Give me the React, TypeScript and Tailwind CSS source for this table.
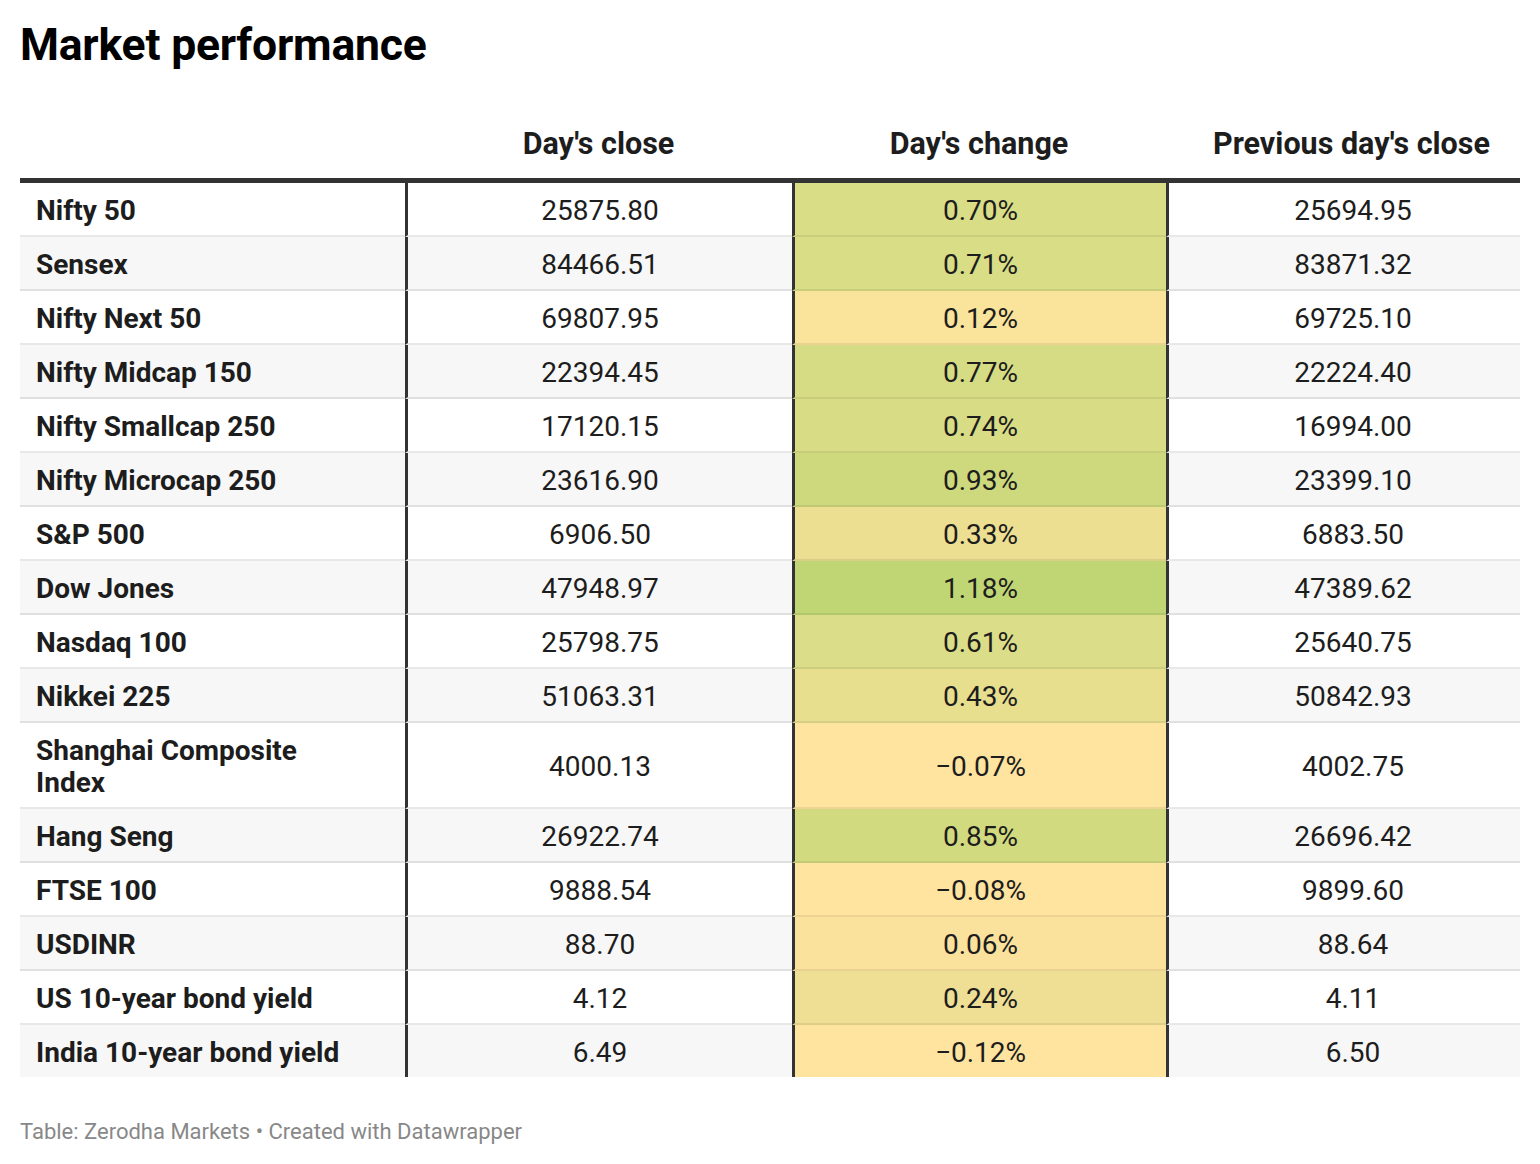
import React from "react";

type Row = { name: string; close: string; change: string; prev: string; bg: string };

const rows: Row[] = [
  { name: "Nifty 50", close: "25875.80", change: "0.70%", prev: "25694.95", bg: "#d9dd86" },
  { name: "Sensex", close: "84466.51", change: "0.71%", prev: "83871.32", bg: "#d8dd86" },
  { name: "Nifty Next 50", close: "69807.95", change: "0.12%", prev: "69725.10", bg: "#fae39b" },
  { name: "Nifty Midcap 150", close: "22394.45", change: "0.77%", prev: "22224.40", bg: "#d6dc84" },
  { name: "Nifty Smallcap 250", close: "17120.15", change: "0.74%", prev: "16994.00", bg: "#d7dc85" },
  { name: "Nifty Microcap 250", close: "23616.90", change: "0.93%", prev: "23399.10", bg: "#cdd97c" },
  { name: "S&P 500", close: "6906.50", change: "0.33%", prev: "6883.50", bg: "#ecdf92" },
  { name: "Dow Jones", close: "47948.97", change: "1.18%", prev: "47389.62", bg: "#c0d674" },
  { name: "Nasdaq 100", close: "25798.75", change: "0.61%", prev: "25640.75", bg: "#dcdd88" },
  { name: "Nikkei 225", close: "51063.31", change: "0.43%", prev: "50842.93", bg: "#e7de8e" },
  { name: "Shanghai Composite Index", close: "4000.13", change: "\u22120.07%", prev: "4002.75", bg: "#ffe4a0" },
  { name: "Hang Seng", close: "26922.74", change: "0.85%", prev: "26696.42", bg: "#d2da80" },
  { name: "FTSE 100", close: "9888.54", change: "\u22120.08%", prev: "9899.60", bg: "#ffe4a0" },
  { name: "USDINR", close: "88.70", change: "0.06%", prev: "88.64", bg: "#fbe29c" },
  { name: "US 10-year bond yield", close: "4.12", change: "0.24%", prev: "4.11", bg: "#eedf94" },
  { name: "India 10-year bond yield", close: "6.49", change: "\u22120.12%", prev: "6.50", bg: "#ffe4a0" },
];

export default function App() {
  return (
    <div
      className="w-[1540px] min-h-[1164px] bg-white text-[#1d1d1d]"
      style={{ fontFamily: "Roboto, 'Liberation Sans', sans-serif" }}
    >
      <div className="pl-5 pr-5 pt-[18px]">
        <h1 className="text-[44.5px] leading-[54px] font-bold text-black tracking-[-0.2px]">Market performance</h1>
        <div className="mt-[56px] w-[1500px]">
          <div className="flex items-end border-b-[5px] border-[#333333] pb-[18px] text-[30.5px] leading-[32px] font-bold">
            <div className="w-[385px] shrink-0" />
            <div className="w-[387px] shrink-0 text-center">Day's close</div>
            <div className="w-[374px] shrink-0 text-center">Day's change</div>
            <div className="flex-1 pl-[17px] text-center">Previous day's close</div>
          </div>
          {rows.map((r, i) => {
            const isLast = i === rows.length - 1;
            return (
              <div
                key={r.name}
                className={`flex text-[28px] leading-[32px] ${i % 2 === 1 ? "bg-[#f7f7f7]" : "bg-white"}`}
              >
                <div
                  className={`w-[385px] shrink-0 pl-4 pr-[60px] pt-[12px] pb-[8px] font-bold ${
                    isLast ? "" : "border-b-2 border-black/[0.09]"
                  }`}
                >
                  {r.name}
                </div>
                <div
                  className={`w-[387px] shrink-0 border-l-[3px] border-l-[#333333] flex items-center justify-center pt-[4px] ${
                    isLast ? "" : "border-b-2 border-b-black/[0.09]"
                  }`}
                >
                  {r.close}
                </div>
                <div
                  className={`w-[374px] shrink-0 border-l-[3px] border-l-[#333333] flex items-center justify-center pt-[4px] ${
                    isLast ? "" : "border-b-2 border-b-black/[0.07]"
                  }`}
                  style={{ backgroundColor: r.bg }}
                >
                  {r.change}
                </div>
                <div
                  className={`flex-1 border-l-[3px] border-l-[#333333] pl-[17px] flex items-center justify-center pt-[4px] ${
                    isLast ? "" : "border-b-2 border-b-black/[0.09]"
                  }`}
                >
                  {r.prev}
                </div>
              </div>
            );
          })}
        </div>
        <div className="mt-[41px] text-[22px] leading-[28px] text-[#888888]">
          Table: Zerodha Markets • Created with Datawrapper
        </div>
      </div>
    </div>
  );
}
